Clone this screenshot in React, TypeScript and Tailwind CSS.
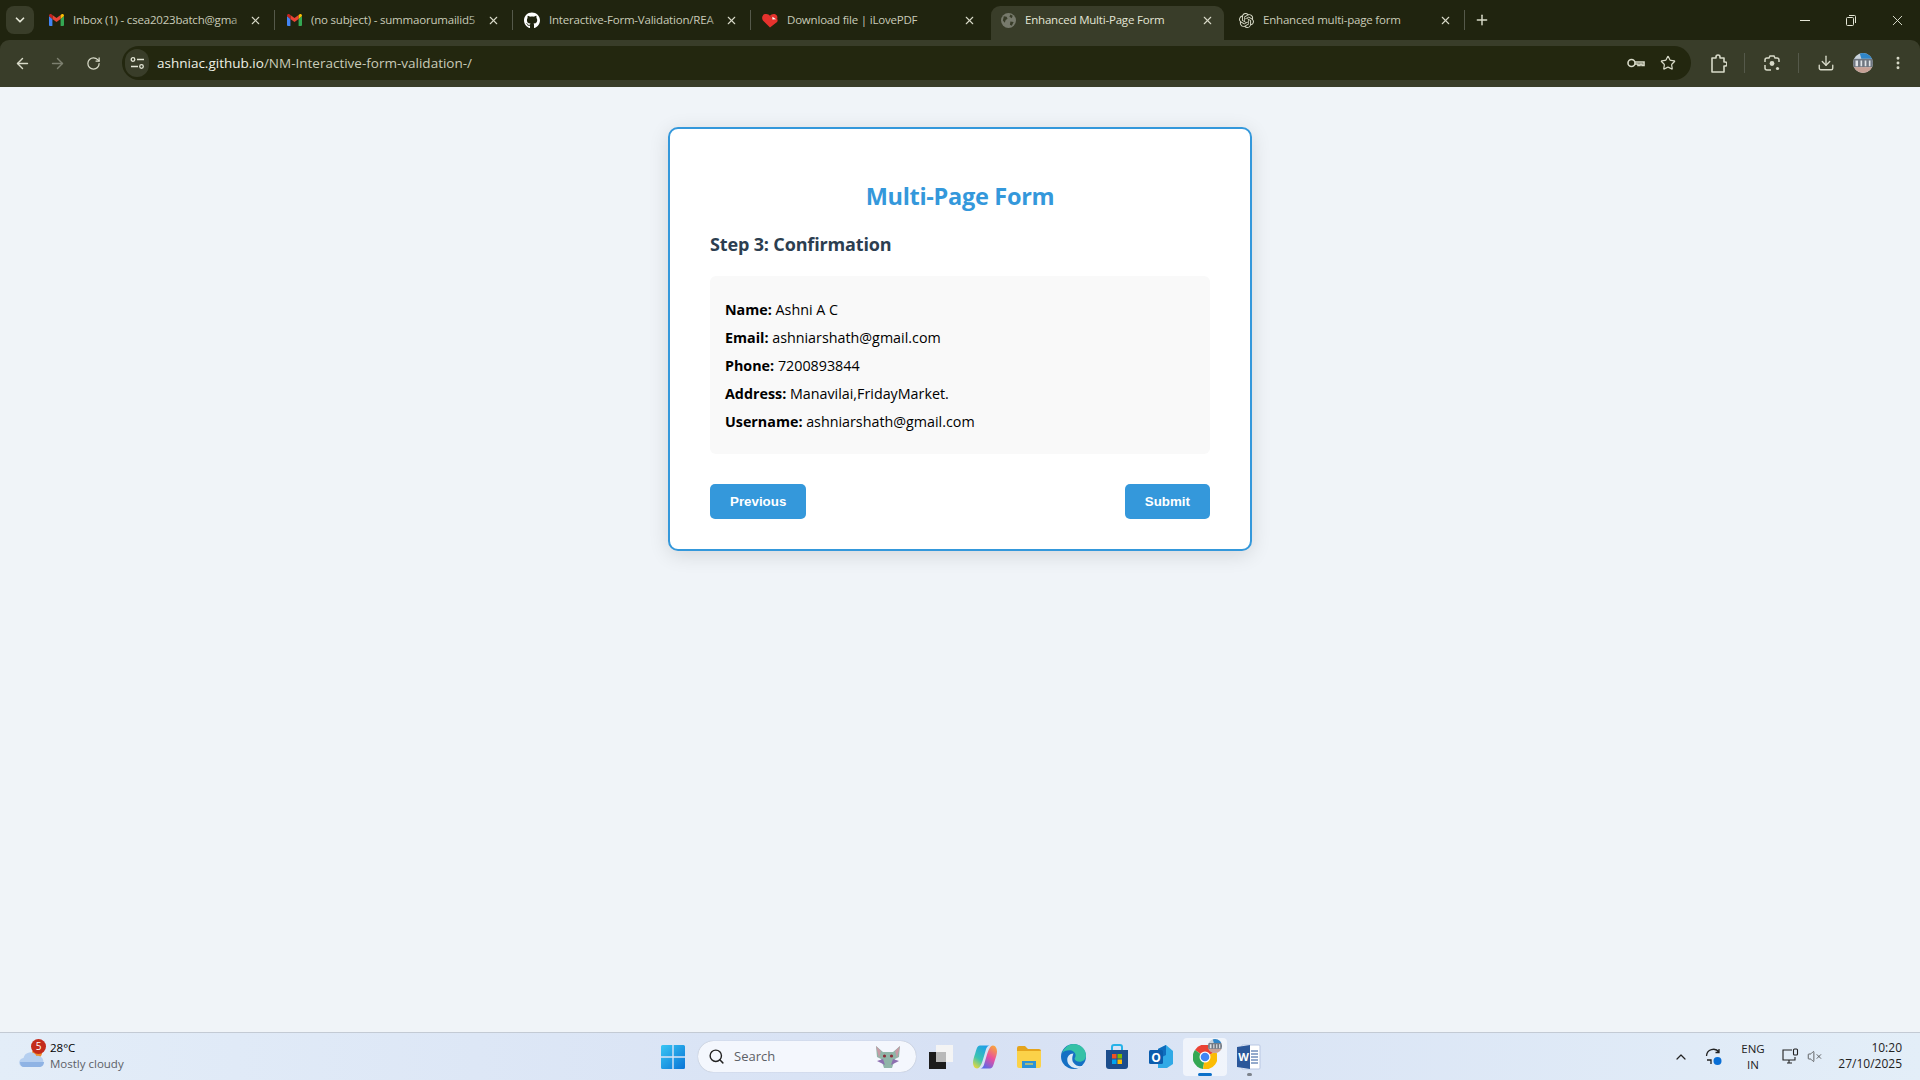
import { ArrowLeft, ArrowRight, ChevronDown, ChevronUp, Download, EllipsisVertical, Plus, RotateCw, Search, Star, VolumeX, X } from 'lucide-react';
import { FaGithub } from 'react-icons/fa';
import { SiOpenai } from 'react-icons/si';

const ui = { fontFamily: '"Open Sans", "Noto Sans", sans-serif' };

function GmailIcon() {
  return (
    <svg width="15" height="12" viewBox="0 0 15 12">
      <path d="M0 2v9a1 1 0 0 0 1 1h2.400V5z" fill="#4285f4" />
      <path d="M11.600 5v7H14a1 1 0 0 0 1-1V2z" fill="#34a853" />
      <path d="M3.400 1v4l4.100 3 4.100-3V1L7.500 4z" fill="#ea4335" />
      <path d="M0 2l3.400 3V1L2 0C1 -.4 0 .6 0 2z" fill="#c5221f" />
      <path d="M15 2l-3.400 3V1L13 0c1-.4 2 .6 2 2z" fill="#fbbc04" />
    </svg>
  );
}

function HeartIcon() {
  return (
    <svg width="17" height="15" viewBox="0 0 17 15">
      <path d="M8.500 15L1 7.500C-.6 5.500 0 1.500 3 .7 5.500 0 7.500 1 8.500 2.500L12 6l3.500-.5c1.500 1 1.300 2.500.5 3.500z" fill="#e5322d" />
      <path d="M8.500 2.500C10 .5 13.500-.5 15.500 2c.8 1 1.100 2.400.7 3.600L12 6z" fill="#e5322d" />
      <path d="M11 3.500l4 2.700-4 .3z" fill="#fff" />
    </svg>
  );
}

function GlobeIcon() {
  return (
    <svg width="15" height="15" viewBox="0 0 16 16">
      <circle cx="8" cy="8" r="8" fill="#777a6c" />
      <path d="M3 3.500l3 .5 1 2-2 1.500-1 3-2-2.500zM10 1.500l2.500 1.500-1 2.500-2.500-1.500zM10 9l3.500.5-2 4-2-1z" fill="#393d29" />
    </svg>
  );
}

function Tab({ icon, title, active, fade }: { icon: React.ReactNode; title: string; active?: boolean; fade?: boolean }) {
  return (
    <div className="relative flex h-[34px] w-[238px] shrink-0 items-center pb-[6px]">
      {active && <div className="absolute inset-y-0 left-[2px] right-[3px] rounded-t-[9px] bg-[#393d29]" />}
      <div className="relative ml-[11px] flex w-[16px] justify-center">{icon}</div>
      <span className={`relative ml-[9px] w-[175px] overflow-hidden whitespace-nowrap text-[11.500px] tracking-[-0.2px] ${active ? 'text-[#e4e6d6]' : 'text-[#c9cbb8]'}`}>
        {title}
        {fade && <span className="absolute inset-y-0 right-0 w-[18px] bg-gradient-to-r from-transparent to-[#20240f]" />}
      </span>
      <X className="relative ml-[1px] text-[#d8dac8]" size={13} strokeWidth={2} />
    </div>
  );
}

function Divider() {
  return <div className="-ml-px mb-[6px] h-[20px] w-px shrink-0 bg-[#55594a]" />;
}

function TabStrip() {
  return (
    <div className="flex h-[40px] items-end bg-[#20240f] pl-[6px]">
      <div className="mb-[6px] mr-[1px] flex h-[28px] w-[28px] shrink-0 items-center justify-center rounded-lg bg-[#393d29]">
        <ChevronDown className="text-[#e4e6d6]" size={14} strokeWidth={3} />
      </div>
      <div className="ml-[2px] flex items-center">
        <Tab icon={<GmailIcon />} title="Inbox (1) - csea2023batch@gma" fade />
        <Divider />
        <Tab icon={<GmailIcon />} title="(no subject) - summaorumailid5" fade />
        <Divider />
        <Tab icon={<FaGithub className="text-white" size={17} />} title="Interactive-Form-Validation/REA" fade />
        <Divider />
        <Tab icon={<HeartIcon />} title="Download file | iLovePDF" />
        <Tab icon={<GlobeIcon />} title="Enhanced Multi-Page Form" active />
        <Tab icon={<SiOpenai className="text-[#d8dac8]" size={15} />} title="Enhanced multi-page form" />
        <Divider />
        <Plus className="mb-[6px] ml-[9px] text-[#d8dac8]" size={16} strokeWidth={2.200} />
      </div>
      <div className="mb-[11px] ml-auto flex items-center pr-[14px] text-[#e4e6d6]">
        <div className="h-px w-[10px] bg-[#e4e6d6]" />
        <svg className="ml-[34px]" width="14" height="14" viewBox="0 0 14 14" fill="none" stroke="currentColor">
          <rect x="2.500" y="3.500" width="7" height="8" rx="1" />
          <path d="M5 1.500h5.500a1 1 0 0 1 1 1V9" />
        </svg>
        <X className="ml-[31px]" size={17} strokeWidth={1.300} />
      </div>
    </div>
  );
}

function TuneIcon() {
  return (
    <svg width="15" height="14" viewBox="0 0 15 14" fill="none" stroke="#e4e6d6" strokeWidth="1.300">
      <circle cx="3" cy="3.500" r="1.800" />
      <path d="M7 3.500h7M1 10.500h7" />
      <circle cx="11.500" cy="10.500" r="1.800" />
    </svg>
  );
}

function KeyIcon() {
  return (
    <svg width="18" height="12" viewBox="0 0 18 12" fill="none" stroke="#d8dac8" strokeWidth="1.600">
      <circle cx="4.500" cy="6" r="3.500" />
      <path d="M8 5h9v3.500h-2V7h-2v1.500h-2V7H8" />
    </svg>
  );
}

function PuzzleIcon() {
  return (
    <svg width="16" height="19" viewBox="0 0 16 19" fill="none" stroke="#d8dac8" strokeWidth="1.600">
      <path d="M1 4h4V3a2 2 0 0 1 4 0v1h4v4h1a2 2 0 0 1 0 4h-1v6H1z" strokeLinejoin="round" />
    </svg>
  );
}

function LensIcon() {
  return (
    <svg width="16" height="18" viewBox="0 0 16 18" fill="none" stroke="#d8dac8" strokeWidth="1.500">
      <path d="M1 8V6a2 2 0 0 1 2-2h2l1-2h4l1 2h2a2 2 0 0 1 2 2v2M1 11v3a2 2 0 0 0 2 2h4" />
      <circle cx="8" cy="9.500" r="2.400" fill="#d8dac8" stroke="none" />
      <circle cx="13.500" cy="14.500" r="1.600" fill="#d8dac8" stroke="none" />
    </svg>
  );
}

function Avatar({ size }: { size: number }) {
  return (
    <svg width={size} height={size} viewBox="0 0 24 24">
      <defs>
        <clipPath id={`av${size}`}>
          <circle cx="12" cy="12" r="12" />
        </clipPath>
      </defs>
      <g clipPath={`url(#av${size})`}>
        <rect width="24" height="24" fill="#c9d3dc" />
        <path d="M8 0h12l4 7H10z" fill="#2f86c9" />
        <rect y="7" width="24" height="10" fill="#6f7680" />
        <path d="M3 9h3v7H3zM9 9h2v7H9zM14 9h2v7h-2zM19 9h2v7h-2z" fill="#dfe3e6" />
        <rect y="17" width="24" height="7" fill="#c7a296" />
      </g>
    </svg>
  );
}

function Toolbar() {
  return (
    <div className="flex h-[47px] items-center rounded-t-[9px] bg-[#393d29] pb-[1px]">
      <ArrowLeft className="ml-[14px] text-[#d8dac8]" size={17} strokeWidth={2} />
      <ArrowRight className="ml-[18px] text-[#7d806f]" size={17} strokeWidth={2} />
      <RotateCw className="ml-[20px] text-[#d8dac8]" size={15} strokeWidth={2} />
      <div className="ml-[21px] flex h-[34px] w-[1569px] items-center rounded-full bg-[#23270f] pl-[3px]">
        <div className="flex h-[28px] w-[24px] items-center justify-center rounded-full bg-[#393d29]">
          <TuneIcon />
        </div>
        <span className="ml-[8px] text-[13.500px] text-[#c9cbb8]">
          <span className="text-[#f0f1e6]">ashniac.github.io</span>/NM-Interactive-form-validation-/
        </span>
        <div className="ml-auto flex items-center gap-[15px] pr-[15px]">
          <KeyIcon />
          <Star className="text-[#d8dac8]" size={16} strokeWidth={1.800} />
        </div>
      </div>
      <div className="ml-[20px] flex items-center">
        <PuzzleIcon />
        <div className="ml-[17px] h-[20px] w-px bg-[#55594a]" />
        <div className="ml-[19px]"><LensIcon /></div>
        <div className="ml-[18px] h-[20px] w-px bg-[#55594a]" />
        <Download className="ml-[18px] text-[#d8dac8]" size={18} strokeWidth={1.800} />
        <div className="ml-[18px]"><Avatar size={20} /></div>
        <EllipsisVertical className="ml-[17px] text-[#d8dac8]" size={16} strokeWidth={2.400} />
      </div>
    </div>
  );
}

function Row({ label, value }: { label: string; value: string }) {
  return (
    <p className="text-[14.300px] leading-[28px] text-black">
      <strong className="font-bold">{label}:</strong> {value}
    </p>
  );
}

function FormCard() {
  return (
    <div className="mt-[40px] w-[584px] rounded-[10px] border-2 border-[#3498db] bg-white px-[40px] pb-[30px] pt-[40px] shadow-[0_4px_20px_rgba(0,0,0,0.12)]">
      <h1 className="mt-[11px] text-center text-[23.500px] font-bold leading-[32px] tracking-[-0.3px] text-[#3498db]">Multi-Page Form</h1>
      <h2 className="mt-[18px] text-[18px] font-bold leading-[28px] tracking-[-0.15px] text-[#2c3e50]">Step 3: Confirmation</h2>
      <div className="mt-[18px] rounded-[6px] bg-[#f9f9f9] pb-[18px] pl-[15px] pt-[20px]">
        <Row label="Name" value="Ashni A C" />
        <Row label="Email" value="ashniarshath@gmail.com" />
        <Row label="Phone" value="7200893844" />
        <Row label="Address" value="Manavilai,FridayMarket." />
        <Row label="Username" value="ashniarshath@gmail.com" />
      </div>
      <div className="mt-[30px] flex justify-between font-['Liberation_Sans',sans-serif] text-[13.330px] font-bold text-white">
        <button className="h-[35px] rounded-[5px] bg-[#3498db] px-[20px]">Previous</button>
        <button className="h-[35px] rounded-[5px] bg-[#3498db] px-[20px]">Submit</button>
      </div>
    </div>
  );
}

function WeatherIcon() {
  return (
    <svg width="26" height="22" viewBox="0 0 26 22">
      <circle cx="18" cy="7" r="5" fill="#ef8b2c" />
      <path d="M5 21a4.500 4.500 0 0 1-.5-9A7 7 0 0 1 17.500 10 5.500 5.500 0 0 1 20 21z" fill="#b5cff0" />
      <path d="M1 16h24c0 3-2 5-5 5H5c-2.500 0-4-2-4-5z" fill="#8fb3e4" />
    </svg>
  );
}

function WinLogo() {
  return (
    <svg width="24" height="24" viewBox="0 0 24 24">
      <defs>
        <linearGradient id="win" x1="0" y1="0" x2="1" y2="1">
          <stop offset="0" stopColor="#38c6f4" />
          <stop offset="1" stopColor="#0a74d6" />
        </linearGradient>
      </defs>
      <path d="M0 1.500A1.500 1.500 0 0 1 1.500 0h9.800v11.300H0zM12.700 0h9.800A1.500 1.500 0 0 1 24 1.500v9.800H12.700zM0 12.700h11.300V24H1.500A1.500 1.500 0 0 1 0 22.500zM12.700 12.700H24v9.800a1.500 1.500 0 0 1-1.500 1.500h-9.800z" fill="url(#win)" />
    </svg>
  );
}

function BatIcon() {
  return (
    <svg width="26" height="26" viewBox="0 0 26 26">
      <path d="M1 2l7 6h10l7-6-1 11-4 2-2 6-1 3h-8l-1-3-2-6-4-2z" fill="#8fb5a8" />
      <path d="M1 2l5 5-2 7zM25 2l-5 5 2 7z" fill="#c79aa5" />
      <path d="M2 17l6-2 2 6zM24 17l-6-2-2 6z" fill="#8d6fb0" />
      <circle cx="9.500" cy="12" r="1.600" fill="#8a2f3a" />
      <circle cx="16.500" cy="12" r="1.600" fill="#8a2f3a" />
    </svg>
  );
}

function TaskViewIcon() {
  return (
    <svg width="24" height="24" viewBox="0 0 24 24">
      <rect y="7" width="17" height="17" fill="#1c1c1c" />
      <rect x="7" width="17" height="17" fill="#f4f4f4" />
      <rect x="7" y="7" width="10" height="10" fill="#b9b9b9" />
    </svg>
  );
}

function CopilotIcon() {
  return (
    <svg width="24" height="24" viewBox="0 0 24 24">
      <defs>
        <linearGradient id="copL" x1="0.700" y1="0" x2="0.200" y2="1">
          <stop offset="0" stopColor="#1f9fe8" />
          <stop offset="0.600" stopColor="#3cc4b0" />
          <stop offset="1" stopColor="#e8d83c" />
        </linearGradient>
        <linearGradient id="copR" x1="0.300" y1="1" x2="0.800" y2="0">
          <stop offset="0" stopColor="#5a6ae8" />
          <stop offset="0.500" stopColor="#e84fa0" />
          <stop offset="1" stopColor="#f9a53a" />
        </linearGradient>
      </defs>
      <path d="M7 .5h9.500c-2 .5-3 2-3.700 4.500L10 14.500c-.7 2.500-1.700 5-2.700 6.500-.8 1.300-1.800 2.500-3.300 2.500C1.500 23.500 0 20.500 0 17.500 0 15 1 12 2.200 8.500 3.500 4.500 4 .5 7 .5z" fill="url(#copL)" />
      <path d="M17 23.500H7.500c2-.5 3-2 3.700-4.500L14 9.500c.7-2.500 1.700-5 2.700-6.500.8-1.300 1.800-2.500 3.300-2.500 2.500 0 4 3 4 6 0 2.500-1 5.500-2.200 9-1.300 4-1.800 8-4.800 8z" fill="url(#copR)" />
    </svg>
  );
}

function FolderIcon() {
  return (
    <svg width="24" height="22" viewBox="0 0 24 22">
      <path d="M0 2a2 2 0 0 1 2-2h6l3 3h11a2 2 0 0 1 2 2v3H0z" fill="#e5a41c" />
      <path d="M0 5h24v15a2 2 0 0 1-2 2H2a2 2 0 0 1-2-2z" fill="#fbd249" />
      <path d="M5 15h14v7H5z" fill="#2b93d8" />
      <path d="M8 17h8v2H8z" fill="#fbd249" opacity=".6" />
    </svg>
  );
}

function EdgeIcon() {
  return (
    <svg width="25" height="25" viewBox="0 0 24 24">
      <circle cx="12" cy="12" r="12" fill="#1570c4" />
      <path d="M1 9C3 3 8 0 12 0c7 0 12 5 12 11 0 4-3 6-6 6-3 0-5-1-5-3 0-1 1-1 1-3 0-3-3-5-6-5-3 0-6 1-7 3z" fill="#35c1a6" />
      <path d="M12 9c-4 0-6 3-6 6 0 4 3 7 7 8 3 .5 6-.5 8-2-3 1-7 0-9-3-2-3-1-7 0-9z" fill="#fff" opacity=".85" />
    </svg>
  );
}

function StoreIcon() {
  return (
    <svg width="24" height="26" viewBox="0 0 24 26">
      <path d="M7 6V3a2 2 0 0 1 2-2h6a2 2 0 0 1 2 2v3" fill="none" stroke="#27b2e8" strokeWidth="2" />
      <path d="M1 6h22v16a3 3 0 0 1-3 3H4a3 3 0 0 1-3-3z" fill="#1c4d8c" />
      <rect x="7" y="10" width="4.500" height="4.500" fill="#f25022" />
      <rect x="12.500" y="10" width="4.500" height="4.500" fill="#7fba00" />
      <rect x="7" y="15.500" width="4.500" height="4.500" fill="#00a4ef" />
      <rect x="12.500" y="15.500" width="4.500" height="4.500" fill="#ffb900" />
    </svg>
  );
}

function OutlookIcon() {
  return (
    <svg width="24" height="24" viewBox="0 0 24 24">
      <path d="M9 4l8-4 7 6v13l-6 4H9z" fill="#30a9e6" />
      <path d="M9 4l8-4v10l-8 4z" fill="#0f6cbd" />
      <rect y="5" width="14" height="14" rx="1.500" fill="#0a5cad" />
      <text x="7" y="16.500" textAnchor="middle" fontSize="12" fontWeight="700" fill="#fff" fontFamily="Open Sans, sans-serif">O</text>
    </svg>
  );
}

function ChromeIcon() {
  return (
    <svg width="24" height="24" viewBox="0 0 24 24">
      <path d="M12 12L2 5a12 12 0 0 1 21 1.500z" fill="#ea4335" />
      <path d="M12 12L2 5a12 12 0 0 0 8 19z" fill="#34a853" />
      <path d="M12 12l11-5.500A12 12 0 0 1 10 24z" fill="#fbbc04" />
      <circle cx="12" cy="12" r="5.500" fill="#fff" />
      <circle cx="12" cy="12" r="4.300" fill="#4285f4" />
    </svg>
  );
}

function WordIcon() {
  return (
    <svg width="24" height="26" viewBox="0 0 24 26">
      <path d="M5 1h17a1 1 0 0 1 1 1v22a1 1 0 0 1-1 1H5z" fill="#fff" stroke="#b9c7e3" />
      <path d="M14 7h7M14 10h7M14 13h7M14 16h7M14 19h7" stroke="#2b579a" />
      <path d="M0 3l13-2v24L0 23z" fill="#2b579a" />
      <text x="6.500" y="17" textAnchor="middle" fontSize="11" fontWeight="700" fill="#fff" fontFamily="Open Sans, sans-serif">W</text>
    </svg>
  );
}

function Slot({ children, active, dot }: { children: React.ReactNode; active?: boolean; dot?: boolean }) {
  return (
    <div className={`relative flex h-[38px] w-[44px] items-center justify-center rounded-[4px] ${active ? 'bg-white/60' : ''}`}>
      {children}
      {active && <div className="absolute bottom-0 h-[3px] w-[14px] rounded-full bg-[#0a6fc9]" />}
      {dot && <div className="absolute bottom-0 h-[3px] w-[5px] rounded-full bg-[#7d838c]" />}
    </div>
  );
}

function Taskbar() {
  return (
    <div className="relative flex h-[48px] items-center border-t border-[#c3cad4] bg-gradient-to-r from-[#e3edf8] via-[#d7e1f4] to-[#e3eef8]">
      <div className="ml-[19px] flex w-[642px] shrink-0 items-center">
        <div className="relative">
          <WeatherIcon />
          <div className="absolute -right-[1px] -top-[7px] flex h-[15px] w-[15px] items-center justify-center rounded-full bg-[#c42b1c] text-[10px] text-white">5</div>
        </div>
        <div className="ml-[5px] pb-[2px] text-[11.500px] leading-[16px]">
          <div className="text-black">28°C</div>
          <div className="text-[#5c6066]">Mostly cloudy</div>
        </div>
      </div>
      <WinLogo />
      <div className="ml-[13px] flex h-[31px] w-[218px] items-center rounded-full bg-[#f4f7fd] pl-[10px] pr-[15px] shadow-[0_0_1px_rgba(0,0,0,0.3)]">
        <Search className="text-[#222]" size={17} strokeWidth={2} />
        <span className="ml-[9px] text-[13px] text-[#5c6066]">Search</span>
        <div className="ml-auto"><BatIcon /></div>
      </div>
      <div className="ml-[3px] flex items-center">
        <Slot><TaskViewIcon /></Slot>
        <Slot><CopilotIcon /></Slot>
        <Slot><FolderIcon /></Slot>
        <Slot><EdgeIcon /></Slot>
        <Slot><StoreIcon /></Slot>
        <Slot><OutlookIcon /></Slot>
        <Slot active>
          <ChromeIcon />
          <div className="absolute right-[5px] top-[1px]"><Avatar size={14} /></div>
        </Slot>
        <Slot dot><WordIcon /></Slot>
      </div>
      <div className="ml-auto flex items-center pr-[18px] text-[#222]">
        <ChevronUp size={16} strokeWidth={1.800} />
        <svg className="ml-[16px]" width="18" height="18" viewBox="0 0 18 18" fill="none" stroke="#222" strokeWidth="1.300">
          <path d="M1.500 8A7 7 0 0 1 14 4M14 1v3.500h-3.500M2 12h4v4" />
          <circle cx="12.500" cy="13" r="4" fill="#0a6fd6" stroke="none" />
        </svg>
        <div className="ml-[16px] w-[28px] text-center text-[11.500px] leading-[16px]">
          <div>ENG</div>
          <div>IN</div>
        </div>
        <svg className="ml-[15px]" width="17" height="17" viewBox="0 0 17 17" fill="none" stroke="#222" strokeWidth="1.100">
          <path d="M10 2H1v10h12V9M5 15h5M7 12v3" />
          <rect x="11.500" y="1" width="4" height="6" rx="1" />
        </svg>
        <VolumeX className="ml-[8px] text-[#444]" size={15} strokeWidth={1.300} />
        <div className="ml-[16px] w-[64px] pb-[2px] text-right text-[12px] leading-[16px]">
          <div>10:20</div>
          <div>27/10/2025</div>
        </div>
      </div>
    </div>
  );
}

export default function App() {
  return (
    <div className="flex h-screen flex-col overflow-hidden bg-[#f0f4f8]" style={ui}>
      <div className="bg-[#20240f]">
        <TabStrip />
        <Toolbar />
      </div>
      <main className="flex flex-1 justify-center">
        <div><FormCard /></div>
      </main>
      <Taskbar />
    </div>
  );
}
